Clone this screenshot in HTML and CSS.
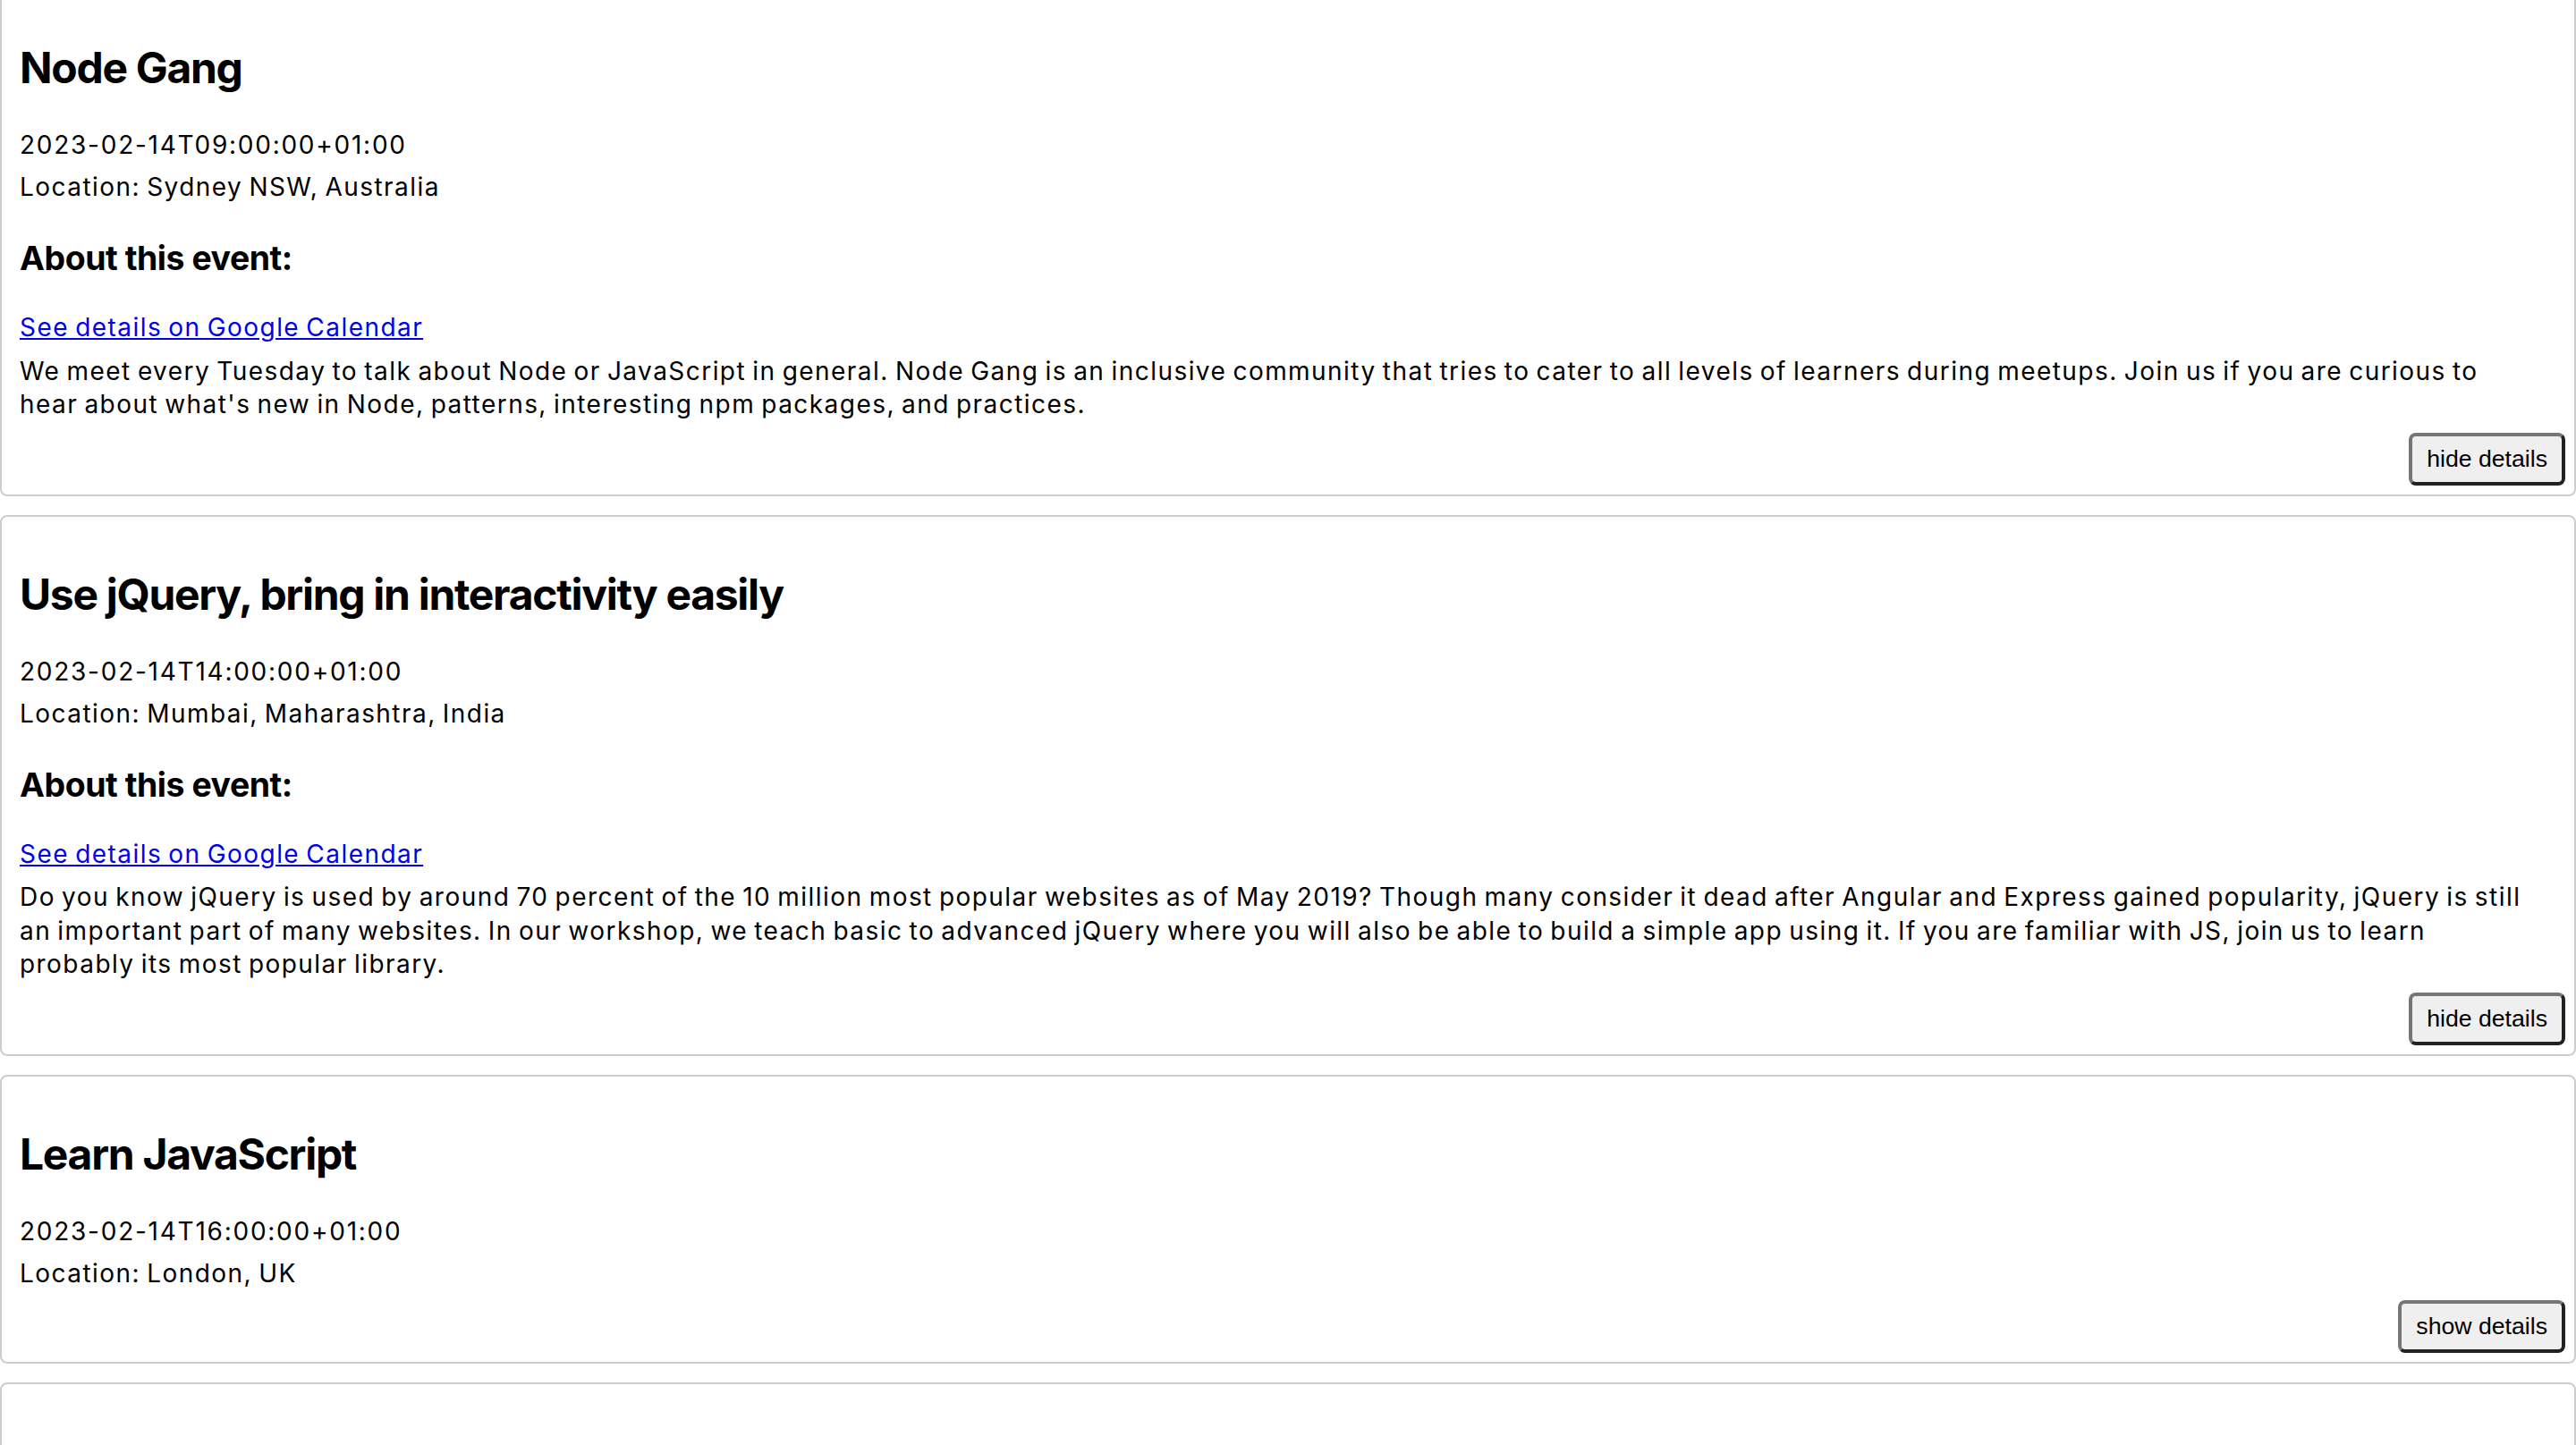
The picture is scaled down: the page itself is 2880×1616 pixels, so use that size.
FILE: index.html
```html
<!DOCTYPE html>
<html lang="en">
<head>
<meta charset="utf-8">
<title>Events</title>
<link rel="stylesheet" href="styles.css">
</head>
<body>
<main class="events">
  <article class="card">
    <h2 class="title">Node Gang</h2>
    <div class="meta-list">
      <p class="meta date">2023-02-14T09:00:00+01:00</p>
      <p class="meta">Location: Sydney NSW, Australia</p>
    </div>
    <div class="details">
      <h3 class="about">About this event:</h3>
      <div class="cal"><a class="cal-link" href="#">See details on Google Calendar</a></div>
      <p class="desc">We meet every Tuesday to talk about Node or JavaScript in general. Node Gang is an inclusive community that tries to cater to all levels of learners during meetups. Join us if you are curious to hear about what's new in Node, patterns, interesting npm packages, and practices.</p>
    </div>
    <div class="actions"><button class="toggle" type="button">hide details</button></div>
  </article>

  <article class="card">
    <h2 class="title">Use jQuery, bring in interactivity easily</h2>
    <div class="meta-list">
      <p class="meta date">2023-02-14T14:00:00+01:00</p>
      <p class="meta">Location: Mumbai, Maharashtra, India</p>
    </div>
    <div class="details">
      <h3 class="about">About this event:</h3>
      <div class="cal"><a class="cal-link" href="#">See details on Google Calendar</a></div>
      <p class="desc">Do you know jQuery is used by around 70 percent of the 10 million most popular websites as of May 2019? Though many consider it dead after Angular and Express gained popularity, jQuery is still an important part of many websites. In our workshop, we teach basic to advanced jQuery where you will also be able to build a simple app using it. If you are familiar with JS, join us to learn probably its most popular library.</p>
    </div>
    <div class="actions"><button class="toggle" type="button">hide details</button></div>
  </article>

  <article class="card collapsed">
    <h2 class="title">Learn JavaScript</h2>
    <div class="meta-list">
      <p class="meta date">2023-02-14T16:00:00+01:00</p>
      <p class="meta">Location: London, UK</p>
    </div>
    <div class="actions"><button class="toggle" type="button">show details</button></div>
  </article>

  <article class="card collapsed card-next">
  </article>
</main>
</body>
</html>
```

FILE: styles.css
```css
html, body {
  margin: 0;
  padding: 0;
  background: #ffffff;
}

body {
  font-family: Inter, "Noto Sans", "Liberation Sans", sans-serif;
  color: #000000;
}

.events {
  margin-top: -13px;
}

.card {
  border: 2px solid #cdcdcd;
  border-radius: 8px;
  padding: 0 10px 10px;
  margin-bottom: 21px;
}

.card-next {
  min-height: 400px;
}

.title {
  margin: 58px 10px 0;
  font-size: 48px;
  line-height: 58px;
  font-weight: 700;
  letter-spacing: -1.3px;
}

.meta-list {
  margin: 34px 10px 0;
}

.meta,
.cal,
.desc {
  font-size: 28px;
  letter-spacing: 1.45px;
  word-spacing: -2.15px;
}

.meta {
  margin: 0;
  line-height: 47px;
}

.meta.date {
  letter-spacing: 1.75px;
}

.details {
  margin: 0 10px;
}

.about {
  margin: 33px 0 0;
  font-size: 37.44px;
  line-height: 45px;
  font-weight: 700;
  letter-spacing: -0.45px;
}

.cal {
  margin-top: 37px;
  line-height: 37.5px;
}

.cal-link {
  color: #0000ee;
  text-decoration: underline;
}

.desc {
  margin: 11px 0 0;
  padding-right: 29px;
  line-height: 37.5px;
}

.actions {
  display: flex;
  justify-content: flex-end;
  margin-top: 12px;
}

.collapsed .actions {
  margin-top: 6px;
}

.toggle {
  font-family: "Liberation Sans", Arial, sans-serif;
  font-size: 26.67px;
  line-height: normal;
  color: #000000;
  background: #efefef;
  padding: 10px 16px;
  border: 4px solid;
  border-color: #767676 #222222 #222222 #767676;
  border-radius: 8px;
  cursor: pointer;
}
```
